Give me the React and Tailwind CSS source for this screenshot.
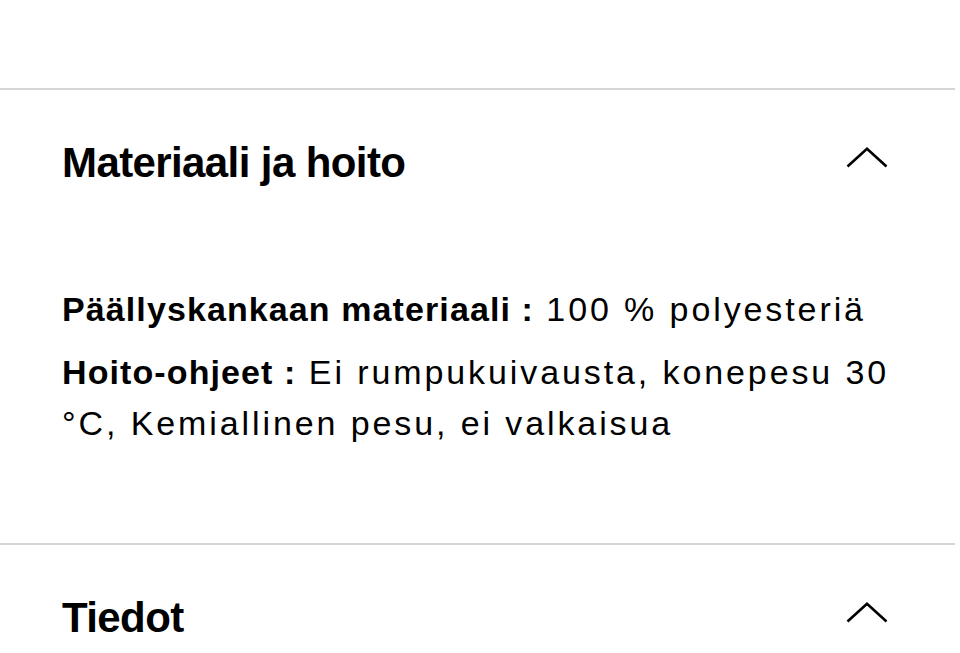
import { useState } from "react";

function Chevron({ open }) {
  return (
    <svg
      width="42"
      height="21"
      viewBox="0 0 42 21"
      fill="none"
      className={open ? "" : "rotate-180"}
    >
      <path d="M1.5 19.5 L21 1.8 L40.5 19.5" stroke="#000" strokeWidth="2.6" strokeLinejoin="miter" />
    </svg>
  );
}

function Section({ title, children }) {
  const [open, setOpen] = useState(true);
  return (
    <section className="border-t-2 border-[#d6d6d6] mr-[5px]">
      <button
        onClick={() => setOpen(!open)}
        className="w-full flex items-start justify-between pl-[62px] pr-[67px] pt-12 text-left"
      >
        <h2 className="text-[42px] leading-[50px] font-bold tracking-[-0.6px] text-black">{title}</h2>
        <span className="mt-[9px]">
          <Chevron open={open} />
        </span>
      </button>
      {open && children}
    </section>
  );
}

export default function App() {
  const rows = [
    { label: "Päällyskankaan materiaali :", value: "100 % polyesteriä" },
    { label: "Hoito-ohjeet :", value: "Ei rumpukuivausta, konepesu 30 °C, Kemiallinen pesu, ei valkaisua" },
  ];

  return (
    <div className="bg-white min-h-screen pt-[88px] font-['Liberation_Sans',Arial,sans-serif] text-black">
      <Section title="Materiaali ja hoito">
        <div className="pl-[62px] pr-[50px] pt-[96px] pb-[94px] flex flex-col gap-3">
          {rows.map((r) => (
            <p key={r.label} className="text-[34px] leading-[51px]">
              <span className="font-bold tracking-[1.1px]">{r.label}</span>
              <span className="tracking-[2.9px]"> {r.value}</span>
            </p>
          ))}
        </div>
      </Section>
      <Section title="Tiedot" />
    </div>
  );
}
